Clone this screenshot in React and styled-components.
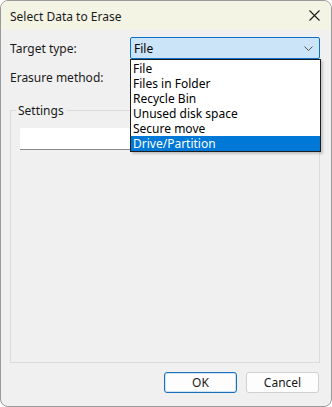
import React from "react";
import styled, { createGlobalStyle } from "styled-components";

const Global = createGlobalStyle`
  html, body { margin: 0; padding: 0; background: #ffffff; }
  body { font-family: "Segoe UI", "Noto Sans", "Open Sans", sans-serif; font-size: 12px; color: #1a1a1a; }
  * { box-sizing: border-box; }
`;

const Window = styled.div`
  position: relative;
  width: 332px;
  height: 407px;
  border: 1px solid #9a9a9a;
  border-radius: 8px;
  background: #f0f0f0;
  display: flex;
  flex-direction: column;
  overflow: hidden;
`;

const TitleBar = styled.div`
  height: 29px;
  background: #f4f4e4;
  display: flex;
  align-items: center;
  justify-content: space-between;
  padding: 0 8px 0 9px;
  flex: none;
`;

const Title = styled.span`
  font-size: 12px;
  color: #1a1a1a;
  padding-top: 1px;
`;

const CloseButton = styled.button`
  width: 14px;
  height: 14px;
  border: none;
  background: none;
  padding: 0;
  display: flex;
  align-items: center;
  justify-content: center;
  margin-right: 2px;
`;

const Content = styled.div`
  flex: 1;
  display: flex;
  flex-direction: column;
  padding: 7px 11px 13px 9px;
`;

const FormRow = styled.div`
  display: grid;
  grid-template-columns: 120px 1fr;
  align-items: center;
  height: 22px;
  margin-bottom: ${(p) => p.$gap || 0}px;
`;

const Label = styled.span`
  font-size: 12px;
  color: #1a1a1a;
`;

const Combo = styled.div`
  height: 22px;
  border: 1px solid ${(p) => (p.$open ? "#0a70c8" : "#b8b8b8")};
  background: ${(p) => (p.$open ? "#cce4f7" : "#ffffff")};
  border-radius: 2px;
  display: flex;
  align-items: center;
  justify-content: space-between;
  padding: 0 6px 0 3px;
  font-size: 12px;
  color: #000;
`;

const GroupBox = styled.fieldset`
  flex: 1;
  margin: 14px 0 9px 0;
  padding: 9px 9px 0 9px;
  border: 1px solid #dcdcdc;
  border-radius: 0;
  min-width: 0;
`;

const Legend = styled.legend`
  padding: 0 2px;
  margin-left: -4px;
  font-size: 12px;
  color: #1a1a1a;
`;

const Field = styled.div`
  height: 22px;
  background: #ffffff;
  border-bottom: 1px solid #8a8a8a;
  border-radius: 2px 2px 0 0;
`;

const ButtonRow = styled.div`
  display: flex;
  justify-content: flex-end;
  gap: 9px;
  padding-right: 1px;
`;

const Button = styled.button`
  width: 73px;
  height: 21px;
  border-radius: 3px;
  border: 1px solid ${(p) => (p.$default ? "#1a6fb8" : "#d0d0d0")};
  background: #fdfdfd;
  font-family: inherit;
  font-size: 12px;
  color: #1a1a1a;
  padding: 0;
  ${(p) => p.$default && "box-shadow: inset 0 0 0 1px #cfe3f5;"}
`;

const DropList = styled.ul`
  position: absolute;
  left: 129px;
  top: 58px;
  width: 191px;
  margin: 0;
  padding: 1px 0 0 0;
  list-style: none;
  background: #ffffff;
  border: 1px solid #1f1f1f;
  box-shadow: 2px 2px 2px rgba(0, 0, 0, 0.18);
`;

const Option = styled.li`
  height: 15px;
  line-height: 15px;
  padding-left: 2px;
  font-size: 12px;
  color: ${(p) => (p.$selected ? "#ffffff" : "#000000")};
  background: ${(p) => (p.$selected ? "#0078d7" : "transparent")};
  white-space: nowrap;
`;

const options = [
  "File",
  "Files in Folder",
  "Recycle Bin",
  "Unused disk space",
  "Secure move",
  "Drive/Partition",
];

export default function App() {
  return (
    <>
      <Global />
      <Window>
        <TitleBar>
          <Title>Select Data to Erase</Title>
          <CloseButton aria-label="Close">
            <svg width="11" height="11" viewBox="0 0 11 11">
              <path d="M0.5 0.5 L10.5 10.5 M10.5 0.5 L0.5 10.5" stroke="#1a1a1a" strokeWidth="1.1" fill="none" />
            </svg>
          </CloseButton>
        </TitleBar>
        <Content>
          <FormRow $gap={7}>
            <Label>Target type:</Label>
            <Combo $open>
              <span>File</span>
              <svg width="9" height="5" viewBox="0 0 9 5">
                <path d="M0.5 0.5 L4.5 4.5 L8.5 0.5" stroke="#555" strokeWidth="1" fill="none" />
              </svg>
            </Combo>
          </FormRow>
          <FormRow>
            <Label>Erasure method:</Label>
            <Combo />
          </FormRow>
          <GroupBox>
            <Legend>Settings</Legend>
            <Field />
          </GroupBox>
          <ButtonRow>
            <Button $default>OK</Button>
            <Button>Cancel</Button>
          </ButtonRow>
        </Content>
        <DropList>
          {options.map((o) => (
            <Option key={o} $selected={o === "Drive/Partition"}>
              {o}
            </Option>
          ))}
        </DropList>
      </Window>
    </>
  );
}
